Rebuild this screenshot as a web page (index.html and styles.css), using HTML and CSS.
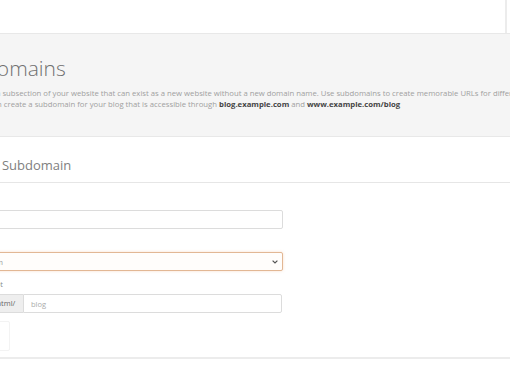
FILE: index.html
```html
<!DOCTYPE html>
<html lang="en">
<head>
  <meta charset="UTF-8" />
  <title>Subdomains</title>
  <link rel="stylesheet" href="styles.css">
</head>
<body>
  <div class="topbar">
    <div class="divider"></div>
  </div>
  <div class="page-head">
    <div class="content">
      <h1>Subdomains</h1>
      <p class="description">A subdomain is a subsection of your website that can exist as a new website without a new domain name. Use subdomains to create memorable URLs for different content areas of your site. For<br>example, you can create a subdomain for your blog that is accessible through <b>blog.example.com</b> and <b>www.example.com/blog</b></p>
    </div>
  </div>
  <div class="panel">
    <div class="panel-heading">
      <div class="content">Create a Subdomain</div>
    </div>
    <div class="panel-body">
      <div class="content">
        <div class="form-group">
          <label>Subdomain</label>
          <input class="form-control" type="text">
        </div>
        <div class="form-group">
          <label>Domain</label>
          <select class="form-control focused">
            <option>example.com</option>
          </select>
        </div>
        <div class="form-group">
          <label>Document Root</label>
          <div class="input-group">
            <span class="addon">public_html/</span>
            <input class="form-control" type="text" placeholder="blog">
          </div>
        </div>
        <button class="btn">Create</button>
      </div>
    </div>
  </div>
</body>
</html>
```

FILE: styles.css
```css
body {
  margin: 0;
  font-family: 'Open Sans', sans-serif;
  color: #333;
  background: #fff;
  width: 510px;
  height: 382px;
  overflow: hidden;
}
.content {
  margin-left: -52px;
}
.topbar {
  height: 33px;
  border-bottom: 1px solid #e8e8e8;
  display: flex;
  justify-content: flex-end;
}
.topbar .divider {
  width: 2px;
  background: #ececec;
  margin-right: 3px;
}
.page-head {
  background: #f5f5f5;
  height: 102px;
  border-bottom: 1px solid #e8e8e8;
}
.page-head h1 {
  margin: 0;
  padding-top: 19px;
  font-size: 21px;
  font-weight: 300;
  line-height: 30px;
  color: #707070;
}
.description {
  margin: 5px 0 0 -9px;
  font-size: 7.72px;
  line-height: 11px;
  color: #a0a0a0;
  white-space: nowrap;
}
.description b {
  color: #444;
  font-weight: bold;
}
.panel {
  border-bottom: 2px solid #ececec;
}
.panel-heading {
  height: 46px;
  box-sizing: border-box;
  padding-top: 19px;
  border-bottom: 1px solid #e6e6e6;
  font-size: 13px;
  line-height: 18px;
  color: #808080;
}
.panel-body {
  padding: 11px 0 6px;
}
.form-group {
  width: 335px;
  margin-bottom: 7px;
}
.form-group label {
  display: block;
  margin-bottom: 4px;
  font-size: 7.5px;
  line-height: 12px;
  color: #888;
}
.form-control {
  display: block;
  width: 100%;
  height: 19px;
  box-sizing: border-box;
  border: 1px solid #dcdcdc;
  border-radius: 2px;
  background: #fff;
  font-family: 'Open Sans', sans-serif;
  font-size: 7.5px;
  color: #999;
  padding: 0 7px;
  outline: none;
}
select.form-control {
  -webkit-appearance: none;
  appearance: none;
  background-color: #fffdfb;
  background-image: url("data:image/svg+xml,%3Csvg xmlns='http://www.w3.org/2000/svg' width='6' height='4'%3E%3Cpath d='M0.6 0.6 L3 3 L5.4 0.6' fill='none' stroke='%23555' stroke-width='1.2'/%3E%3C/svg%3E");
  background-repeat: no-repeat;
  background-position: right 4px center;
}
.focused {
  border-color: #e2b794;
  box-shadow: 0 0 3px rgba(235, 160, 100, 0.35);
}
.input-group {
  display: flex;
  width: 334px;
}
.input-group .addon {
  flex: none;
  width: 75px;
  height: 19px;
  box-sizing: border-box;
  padding-left: 23px;
  background: #eeeeee;
  border: 1px solid #dcdcdc;
  border-right: none;
  font-size: 7.5px;
  line-height: 17px;
  color: #666;
}
.input-group .form-control {
  flex: 1;
  border-radius: 0 2px 2px 0;
}
.input-group .form-control::placeholder {
  color: #aaa;
}
.btn {
  display: block;
  margin-top: 8px;
  width: 62px;
  height: 30px;
  background: #fff;
  border: 1px solid #f3f3f3;
  border-radius: 2px;
  font-family: 'Open Sans', sans-serif;
  font-size: 7.5px;
  color: #fff;
}
```
